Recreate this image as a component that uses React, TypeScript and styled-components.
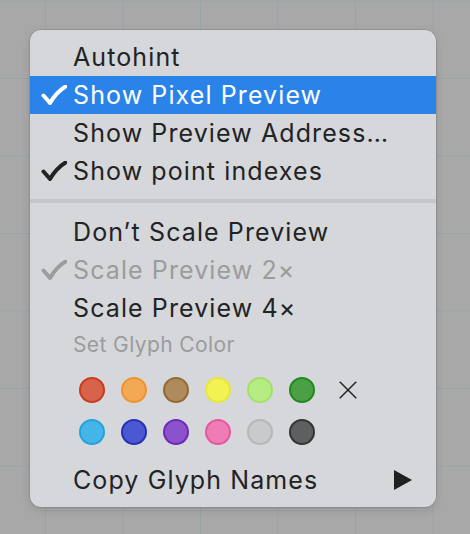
import React from "react";
import styled, { createGlobalStyle } from "styled-components";

const Global = createGlobalStyle`
  html, body { margin: 0; padding: 0; }
  body {
    width: 470px;
    height: 534px;
    overflow: hidden;
    background-color: #a8a8a8;
    background-image:
      linear-gradient(to right, #99a3a8 1px, transparent 1px),
      linear-gradient(to bottom, #99a3a8 1px, transparent 1px);
    background-size: 77.5px 77.5px;
    background-position: 45px 0.5px;
    font-family: Inter, "Noto Sans", "Liberation Sans", sans-serif;
  }
`;

const Stage = styled.div`
  padding: 30px 0 0 30px;
  border-top: 1px solid #c9ae92;
  margin-top: -1px;
`;

const Menu = styled.div`
  width: 406px;
  height: 477px;
  box-sizing: border-box;
  padding: 8px 0;
  background: #d5d7da;
  border-radius: 11px;
  box-shadow: 0 0 0 0.5px rgba(0, 0, 0, 0.18), 0 3px 10px rgba(0, 0, 0, 0.12);
  display: flex;
  flex-direction: column;
  overflow: hidden;
`;

const Row = styled.div<{ $active?: boolean; $disabled?: boolean }>`
  height: 38px;
  display: grid;
  grid-template-columns: 43px 1fr auto;
  align-items: center;
  font-size: 25px;
  letter-spacing: 1.1px;
  color: ${(p) => (p.$active ? "#ffffff" : p.$disabled ? "#9b9c9e" : "#222325")};
  background: ${(p) => (p.$active ? "#2a83e8" : "transparent")};
  padding-right: 24px;
`;

const CheckCell = styled.span`
  display: flex;
  justify-content: flex-end;
  padding-right: 6px;
  align-items: center;
`;

const Label = styled.span`
  white-space: nowrap;
`;

const Separator = styled.div`
  height: 4px;
  background: #c4c6c9;
  margin: 9px 0 10px;
`;

const Caption = styled.div`
  height: 34px;
  display: flex;
  align-items: center;
  padding-left: 43px;
  font-size: 21px;
  letter-spacing: 0.4px;
  color: #9b9c9e;
`;

const Swatches = styled.div`
  display: grid;
  grid-template-columns: repeat(6, 26px) 26px;
  column-gap: 16px;
  row-gap: 16px;
  padding: 16px 0 16px 49px;
`;

const Dot = styled.span<{ $fill: string; $edge: string }>`
  width: 26px;
  height: 26px;
  box-sizing: border-box;
  border-radius: 50%;
  background: ${(p) => p.$fill};
  border: 2px solid ${(p) => p.$edge};
`;

const Clear = styled.span`
  display: flex;
  align-items: center;
  justify-content: center;
  margin-left: 8px;
`;

const Check = ({ color }: { color: string }) => (
  <svg width="26" height="20" viewBox="0 0 26 20">
    <path
      d="M2.5 10.5 L9 18 C13 11 18 5.5 24.5 1.5"
      fill="none"
      stroke={color}
      strokeWidth="4"
      strokeLinecap="round"
      strokeLinejoin="round"
    />
  </svg>
);

const rows1 = [
  { label: "Autohint" },
  { label: "Show Pixel Preview", check: true, active: true },
  { label: "Show Preview Address…" },
  { label: "Show point indexes", check: true },
];

const colors: [string, string][] = [
  ["#d6634a", "#c93a1f"],
  ["#f3a953", "#ef9230"],
  ["#ae8a5c", "#946a32"],
  ["#f2f352", "#e6e63a"],
  ["#b7eb83", "#a2e168"],
  ["#4ba045", "#22891e"],
  ["#44b5e6", "#22a3df"],
  ["#4c58cf", "#2231b7"],
  ["#8b52cb", "#6d2ab6"],
  ["#ef7cb6", "#e6579d"],
  ["#c9cacb", "#b6b7b8"],
  ["#5e5f5f", "#333435"],
];

export default function App() {
  return (
    <>
      <Global />
      <Stage>
        <Menu>
          {rows1.map((r) => (
            <Row key={r.label} $active={r.active}>
              <CheckCell>{r.check && <Check color={r.active ? "#fff" : "#222325"} />}</CheckCell>
              <Label>{r.label}</Label>
            </Row>
          ))}
          <Separator />
          <Row>
            <CheckCell />
            <Label>Don’t Scale Preview</Label>
          </Row>
          <Row $disabled>
            <CheckCell>
              <Check color="#9b9c9e" />
            </CheckCell>
            <Label>Scale Preview 2×</Label>
          </Row>
          <Row>
            <CheckCell />
            <Label>Scale Preview 4×</Label>
          </Row>
          <Caption>Set Glyph Color</Caption>
          <Swatches>
            {colors.slice(0, 6).map(([f, e]) => (
              <Dot key={f} $fill={f} $edge={e} />
            ))}
            <Clear>
              <svg width="24" height="24" viewBox="0 0 24 24">
                <path d="M1 1 L23 23 M23 1 L1 23" stroke="#222325" strokeWidth="2" />
              </svg>
            </Clear>
            {colors.slice(6).map(([f, e]) => (
              <Dot key={f} $fill={f} $edge={e} />
            ))}
          </Swatches>
          <Row>
            <CheckCell />
            <Label>Copy Glyph Names</Label>
            <svg width="18" height="20" viewBox="0 0 18 20">
              <path d="M0 0 L18 10 L0 20 Z" fill="#1f2022" />
            </svg>
          </Row>
        </Menu>
      </Stage>
    </>
  );
}
